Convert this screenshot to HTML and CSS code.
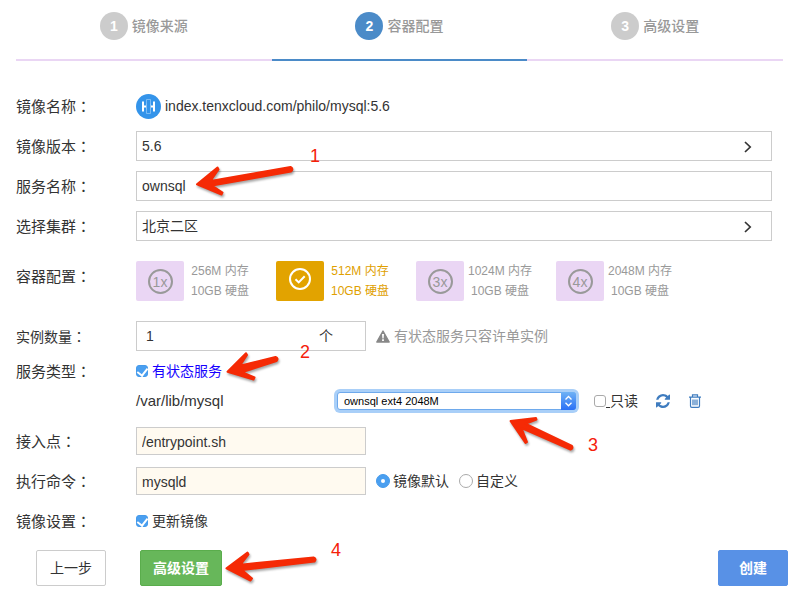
FILE: index.html
```html
<!DOCTYPE html>
<html lang="zh-CN">
<head>
<meta charset="utf-8">
<title>容器配置</title>
<link rel="stylesheet" href="styles.css">
</head>
<body>
<ol class="steps">
  <li class="step"><span class="step-num">1</span><span>镜像来源</span></li>
  <li class="step step-active"><span class="step-num">2</span><span>容器配置</span></li>
  <li class="step"><span class="step-num">3</span><span>高级设置</span></li>
</ol>

<form class="form">
  <div class="row">
    <span class="label">镜像名称<span class="colon" lang="zh-Hant">：</span></span>
    <div class="field image-name">
      <svg class="logo" viewBox="0 0 25 25" aria-hidden="true">
        <circle cx="12.500" cy="12.500" r="12.500" fill="#3494ea"/>
        <path d="M7 7.500v10M18 7.500v10" stroke="#fff" stroke-width="2"/>
        <path d="M8 12.500h2M15 12.500h2" stroke="#fff" stroke-width="2"/>
        <path d="M10.500 5.500h4v14h-4zM10.500 9.500v6M14.500 9.500v6" fill="none" stroke="#8cc4f7" stroke-width="0.800"/>
      </svg>
      <span>index.tenxcloud.com/philo/mysql:5.6</span>
    </div>
  </div>

  <div class="row">
    <label class="label" for="version">镜像版本<span class="colon" lang="zh-Hant">：</span></label>
    <div class="field picker">
      <select class="box" id="version"><option>5.6</option></select>
      <svg class="chevron" viewBox="0 0 8 12" aria-hidden="true"><path d="M1 1L6.200 6L1 11" fill="none" stroke="#333" stroke-width="1.700"/></svg>
    </div>
  </div>

  <div class="row">
    <label class="label" for="service">服务名称<span class="colon" lang="zh-Hant">：</span></label>
    <div class="field"><input class="box" id="service" type="text" value="ownsql"></div>
  </div>

  <div class="row">
    <label class="label" for="cluster">选择集群<span class="colon" lang="zh-Hant">：</span></label>
    <div class="field picker">
      <select class="box" id="cluster"><option>北京二区</option></select>
      <svg class="chevron" viewBox="0 0 8 12" aria-hidden="true"><path d="M1 1L6.200 6L1 11" fill="none" stroke="#333" stroke-width="1.700"/></svg>
    </div>
  </div>

  <div class="row row-plans">
    <span class="label">容器配置<span class="colon" lang="zh-Hant">：</span></span>
    <div class="plans">
      <button class="plan" type="button"><span class="tile"><span class="ring">1x</span></span><span class="spec">256M 内存<br>10GB 硬盘</span></button>
      <button class="plan plan-active" type="button"><span class="tile"><svg class="tick" viewBox="0 0 24 24" aria-hidden="true"><circle cx="12" cy="10" r="10" fill="none" stroke="#fff" stroke-width="2"/><path d="M7.500 10.200l3.200 3.200l6-6.200" fill="none" stroke="#fff" stroke-width="2"/></svg></span><span class="spec">512M 内存<br>10GB 硬盘</span></button>
      <button class="plan" type="button"><span class="tile"><span class="ring">3x</span></span><span class="spec">1024M 内存<br>10GB 硬盘</span></button>
      <button class="plan" type="button"><span class="tile"><span class="ring">4x</span></span><span class="spec">2048M 内存<br>10GB 硬盘</span></button>
    </div>
  </div>

  <div class="row">
    <label class="label label-tight" for="count">实例数量<span class="colon" lang="zh-Hant">：</span></label>
    <div class="field inline">
      <span class="counter"><input class="counter-input" id="count" type="text" value="1"><span>个</span></span>
      <span class="hint">
        <svg class="warn" viewBox="0 0 14 13" aria-hidden="true"><path d="M7 1L13.200 12H.800z" fill="#888" stroke="#888" stroke-width="1.400" stroke-linejoin="round"/><path d="M6 4h2l-.400 4.500h-1.200zM6.100 9.300h1.800v1.700h-1.800z" fill="#fff"/></svg>
        <span>有状态服务只容许单实例</span>
      </span>
    </div>
  </div>

  <div class="row row-short">
    <span class="label">服务类型<span class="colon" lang="zh-Hant">：</span></span>
    <label class="option stateful"><input class="check" type="checkbox" checked>有状态服务</label>
  </div>

  <div class="row row-short row-volume">
    <span class="label"></span>
    <div class="field inline">
      <label class="path" for="volume">/var/lib/mysql</label>
      <span class="volume">
        <select class="volume-select" id="volume"><option>ownsql ext4 2048M</option></select>
        <svg class="volume-arrows" viewBox="0 0 15 18" aria-hidden="true">
          <defs><linearGradient id="blue" x2="0" y2="1"><stop stop-color="#6fb2f5"/><stop offset="1" stop-color="#2a70f6"/></linearGradient></defs>
          <path d="M0 0h12a3 3 0 0 1 3 3v12a3 3 0 0 1-3 3H0z" fill="url(#blue)"/>
          <path d="M4.500 7.500L7.500 4.500L10.500 7.500M4.500 10.800L7.500 13.800L10.500 10.800" fill="none" stroke="#fff" stroke-width="1.300"/>
        </svg>
      </span>
      <label class="option readonly"><input class="check" type="checkbox"><span class="tie"></span>只读</label>
      <a class="action" href="#" aria-label="刷新"><svg class="icon" viewBox="0 0 1536 1536" aria-hidden="true"><path fill="#3f7cbf" d="M1511 928q0 5-1 7-64 268-268 434.500T764 1536q-146 0-282.500-55T238 1324l-129 129q-19 19-45 19t-45-19-19-45V960q0-26 19-45t45-19h448q26 0 45 19t19 45-19 45l-137 137q71 66 161 102t187 36q134 0 250-65t186-179q11-17 53-117 8-23 30-23h192q13 0 22.500 9.500t9.500 22.500zm25-800v448q0 26-19 45t-45 19h-448q-26 0-45-19t-19-45 19-45l138-138Q969 256 768 256q-134 0-250 65T332 500q-11 17-53 117-8 23-30 23H50q-13 0-22.500-9.500T18 608v-7q65-268 270-434.500T768 0q146 0 284 55.500T1297 212l130-129q19-19 45-19t45 19 19 45z"/></svg></a>
      <a class="action" href="#" aria-label="删除"><svg class="icon" viewBox="0 0 14 14" aria-hidden="true"><path d="M1 3.200h12M4.500 3V.800h5V3M2.500 3.500V12q0 1.300 1.300 1.300h6.400q1.300 0 1.300-1.300V3.500M5 5.500v5.800M7 5.500v5.800M9 5.500v5.800" fill="none" stroke="#3f7cbf" stroke-width="1.200"/></svg></a>
    </div>
  </div>

  <div class="row">
    <label class="label" for="entry">接入点<span class="colon" lang="zh-Hant">：</span></label>
    <div class="field"><input class="box box-cream" id="entry" type="text" value="/entrypoint.sh"></div>
  </div>

  <div class="row">
    <label class="label" for="command">执行命令<span class="colon" lang="zh-Hant">：</span></label>
    <div class="field inline">
      <input class="box box-cream" id="command" type="text" value="mysqld">
      <label class="option mode"><input class="radio" type="radio" name="mode" checked>镜像默认</label>
      <label class="option mode"><input class="radio" type="radio" name="mode">自定义</label>
    </div>
  </div>

  <div class="row">
    <span class="label">镜像设置<span class="colon" lang="zh-Hant">：</span></span>
    <label class="option"><input class="check" type="checkbox" checked>更新镜像</label>
  </div>

  <div class="footer">
    <button class="btn" type="button">上一步</button>
    <button class="btn btn-green" type="button">高级设置</button>
    <button class="btn btn-blue" type="submit">创建</button>
  </div>
</form>

<div class="notes">
  <svg class="arrows" viewBox="0 0 799 607" aria-hidden="true">
    <path d="M197 184.300L217.500 167.500L218.500 169.500L210.500 181L290.500 167Q294 168.800 291 171.500L212 185.500L222.500 192.500L221.500 194.500Z"/>
    <path d="M227.500 371.700L246 353.200L247 355L240 365.700L275.500 357Q279 358.500 276.500 361L242 372.200L254.500 377.500L253.500 379.500Z"/>
    <path d="M510.500 421L536 418L536.500 419.500L525.500 423.700L572 446Q573.500 448.300 570.500 449.500L521.500 428L527 442L525.500 443Z"/>
    <path d="M226.500 568.300L247.500 552.500L248.500 554.500L240.500 564.700L313.500 557.500Q317 559 314.500 561.500L242 570L252 578.500L250.500 580.500Z"/>
  </svg>
  <span class="note note-1">1</span>
  <span class="note note-2">2</span>
  <span class="note note-3">3</span>
  <span class="note note-4">4</span>
</div>
</body>
</html>
```
FILE: styles.css
```css
* { box-sizing: border-box; }

body {
  position: relative;
  margin: 0;
  background: #fff;
  color: #333;
  font: 14px/20px "Liberation Sans", "Noto Sans CJK SC", sans-serif;
}

input, select, button { font: inherit; color: inherit; margin: 0; }

.steps {
  display: grid;
  grid-template-columns: repeat(3, 1fr);
  margin: 0 16px;
  padding: 0;
  list-style: none;
  color: #999;
  font-weight: 500;
}
.step {
  display: flex;
  justify-content: center;
  gap: 4px;
  padding: 12px 0 19px;
  border-bottom: 2px solid #ead6f4;
  line-height: 28px;
}
.step-num {
  width: 28px;
  height: 28px;
  border-radius: 50%;
  background: #ccc;
  color: #fff;
  font-weight: 700;
  text-align: center;
}
.step-active { border-color: #4b8bc8; }
.step-active .step-num { background: #4b8bc8; }

.form { padding: 25px 27px 20px 16px; }
.row {
  display: flex;
  align-items: center;
  min-height: 40px;
}
.row-short { min-height: 30px; }
.row-plans { min-height: 70px; }
.row-plans .label { padding-bottom: 10px; }
.row-volume { margin-bottom: 5px; }
.label { flex: 0 0 120px; font-size: 15px; }
.label-tight { font-size: 14px; }
.colon { font-family: "Noto Sans CJK TC", sans-serif; }
.field { flex: 1; min-width: 0; }
.inline { display: flex; align-items: center; }

.image-name { display: flex; align-items: center; gap: 4px; }
.logo { width: 25px; height: 25px; }

.box {
  display: block;
  width: 100%;
  height: 30px;
  padding: 0 5px;
  border: 1px solid #ccc;
  border-radius: 0;
  background: #fff;
  appearance: none;
}
.box-cream {
  width: 230px;
  height: 28px;
  padding-top: 2px;
  background: #fffaf0;
}
.picker { position: relative; }
.chevron {
  position: absolute;
  top: 10px;
  right: 20px;
  width: 8px;
  height: 12px;
  pointer-events: none;
}

.plans { display: flex; flex-wrap: wrap; gap: 20px; }
.plan {
  display: flex;
  padding: 0;
  border: 0;
  background: none;
  color: #999;
  font-size: 12px;
  line-height: 20px;
}
.tile {
  display: flex;
  align-items: center;
  justify-content: center;
  width: 48px;
  height: 40px;
  border-radius: 2px;
  background: #ead6f4;
}
.ring {
  width: 25px;
  height: 25px;
  border: 2px solid #999;
  border-radius: 50%;
  font-size: 14px;
  line-height: 22px;
  text-align: center;
}
.tick { width: 24px; height: 24px; overflow: visible; }
.spec { width: 72px; text-align: center; }
.plan-active { color: #e0a000; }
.plan-active .tile { background: #e2a300; }

.counter {
  display: flex;
  align-items: center;
  width: 230px;
  height: 30px;
  padding: 0 32px 0 9px;
  border: 1px solid #ccc;
}
.counter-input {
  flex: 1;
  min-width: 0;
  padding: 0;
  border: 0;
  background: none;
}
.hint { display: flex; align-items: center; gap: 4px; margin-left: 10px; color: #999; }
.warn { width: 14px; height: 13px; }

.option { display: flex; align-items: center; gap: 4px; }
.stateful { color: #1500ff; }
.check, .radio {
  display: grid;
  place-items: center;
  flex: none;
  width: 12px;
  height: 12px;
  border: 1px solid #aaa;
  border-radius: 3px;
  background: #fff;
  appearance: none;
}
.check:checked, .radio:checked { border-color: #459aeb; background: #4a9ff0; }
.check:checked::before {
  content: "";
  width: 5px;
  height: 8px;
  margin-bottom: 2px;
  border: solid #fff;
  border-width: 0 2px 2px 0;
  transform: rotate(38deg);
}
.radio { width: 14px; height: 14px; border-radius: 50%; }
.radio:checked::before {
  content: "";
  width: 4px;
  height: 4px;
  border-radius: 50%;
  background: #fff;
}
.mode { gap: 3px; margin-left: 10px; }

.path { width: 201px; font-size: 15px; }
.volume { position: relative; width: 239px; }
.volume-select {
  display: block;
  width: 100%;
  height: 18px;
  padding: 0 20px 0 6px;
  border: 1px solid #6ea9ec;
  border-radius: 3px;
  outline: 0;
  box-shadow: 0 0 0 3px #a9cff8;
  background: #fff;
  color: #000;
  font-size: 11px;
  line-height: 16px;
  appearance: none;
}
.volume-arrows {
  position: absolute;
  top: 0;
  right: 0;
  width: 15px;
  height: 18px;
  pointer-events: none;
}
.readonly { gap: 0; margin-left: 18px; }
.tie { width: 4px; height: 14px; border-bottom: 1px solid #333; }
.action { display: flex; margin-left: 18px; }
.icon { width: 14px; height: 14px; }

.footer {
  display: flex;
  margin: 9px -16px 0 20px;
}
.btn {
  height: 36px;
  padding: 0 13px;
  border: 1px solid #ccc;
  border-radius: 2px;
  background: #fff;
}
.btn-green {
  margin-left: 34px;
  padding: 0 12px;
  border-color: #5aad4c;
  background: #67b75a;
  color: #fff;
  font-weight: 700;
}
.btn-blue {
  min-width: 70px;
  margin-left: auto;
  border-color: #5891e6;
  background: #5891e6;
  color: #fff;
  font-weight: 700;
}

/* Tutorial annotations drawn over the form */
.notes { position: absolute; top: 0; left: 0; pointer-events: none; }
.arrows {
  display: block;
  width: 799px;
  height: 607px;
  fill: #f52a05;
  stroke: #f52a05;
  stroke-width: 2;
  stroke-linejoin: round;
  filter: drop-shadow(1px 2px 1px rgba(0, 0, 0, 0.35));
}
.note { position: absolute; color: #f5200a; font-size: 18px; }
.note-1 { left: 310px; top: 146px; }
.note-2 { left: 300px; top: 342px; }
.note-3 { left: 588px; top: 435px; }
.note-4 { left: 331px; top: 540px; }
```
